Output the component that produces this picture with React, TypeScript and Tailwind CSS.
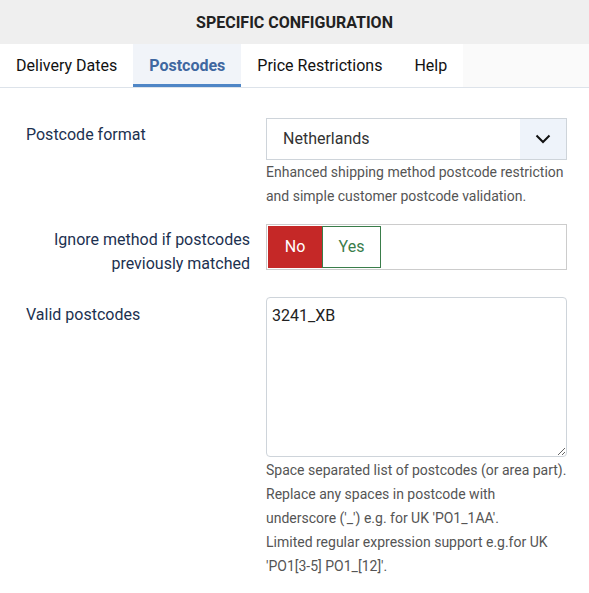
import { useState } from "react"

const tabs = ["Delivery Dates", "Postcodes", "Price Restrictions", "Help"]

export default function App() {
  const [active, setActive] = useState("Postcodes")
  const [ignore, setIgnore] = useState(false)

  return (
    <div className="min-h-screen bg-white font-['Roboto',sans-serif] text-[#222]">
      {/* Header */}
      <div className="flex h-[44px] items-center justify-center bg-[#efefef] pt-px">
        <h1 className="text-base font-bold uppercase text-[#222]">Specific Configuration</h1>
      </div>

      {/* Tabs */}
      <div className="flex border-b border-[#dde3ea] bg-[#fafafa]">
        <div className="flex bg-white">
          {tabs.map((tab) => (
            <button
              key={tab}
              onClick={() => setActive(tab)}
              className={
                tab === active
                  ? "h-[43px] border-b-[3px] border-[#4f86c6] bg-[#f1f4f9] px-4 pt-[3px] text-base font-bold text-[#3f67a0]"
                  : "h-[43px] border-b-[3px] border-transparent px-4 pt-[3px] text-base text-[#111]"
              }
            >
              {tab}
            </button>
          ))}
        </div>
      </div>

      {/* Form */}
      <div className="pt-[30px] pr-[22px]">
        {/* Postcode format */}
        <div className="flex">
          <label className="w-[250px] shrink-0 pl-[26px] pt-[5px] text-base leading-6 text-[#1c3150]">Postcode format</label>
          <div className="ml-4 flex-1">
            <div className="flex h-[42px] items-stretch border border-[#ced4da] bg-white">
              <span className="flex flex-1 items-center pl-4 text-base text-[#333]">Netherlands</span>
              <span className="flex w-[46px] items-center justify-center bg-[#eef3fa]">
                <svg width="16" height="10" viewBox="0 0 16 10" fill="none">
                  <path d="M1.5 1.5 8 8l6.5-6.5" stroke="#111" strokeWidth="2" />
                </svg>
              </span>
            </div>
            <p className="text-sm leading-6 text-[#555]">
              Enhanced shipping method postcode restriction and simple customer postcode validation.
            </p>
          </div>
        </div>

        {/* Ignore method */}
        <div className="mt-4 flex">
          <label className="w-[250px] shrink-0 pl-[26px] pt-1 text-right text-base leading-6 text-[#1c3150]">
            Ignore method if postcodes previously matched
          </label>
          <div className="ml-4 flex-1">
            <div className="flex h-[46px] border border-[#ccc] p-px">
              <button
                onClick={() => setIgnore(false)}
                className={
                  !ignore
                    ? "w-[54px] bg-[#c52827] text-base text-white"
                    : "w-[54px] border border-[#c52827] bg-white text-base text-[#c52827]"
                }
              >
                No
              </button>
              <button
                onClick={() => setIgnore(true)}
                className={
                  ignore
                    ? "w-[59px] bg-[#3a7d4a] text-base text-white"
                    : "w-[59px] border border-[#3a7d4a] bg-white text-base text-[#3a7d4a]"
                }
              >
                Yes
              </button>
            </div>
          </div>
        </div>

        {/* Valid postcodes */}
        <div className="mt-[21px] flex">
          <label className="w-[250px] shrink-0 pl-[26px] pt-[6px] text-base leading-6 text-[#1c3150]">Valid postcodes</label>
          <div className="ml-4 flex-1">
            <textarea
              defaultValue="3241_XB"
              className="block h-[160px] w-full rounded border border-[#ced4da] px-[5px] py-[6px] text-base leading-6 text-[#222] outline-none"
            />
            <p className="pt-px text-sm leading-6 text-[#555]">
              Space separated list of postcodes (or area part). Replace any spaces in postcode with underscore ('_')
              e.g. for UK 'PO1_1AA'.
              <br />
              Limited regular expression support e.g.for UK 'PO1[3-5] PO1_[12]'.
            </p>
          </div>
        </div>
      </div>
    </div>
  )
}
